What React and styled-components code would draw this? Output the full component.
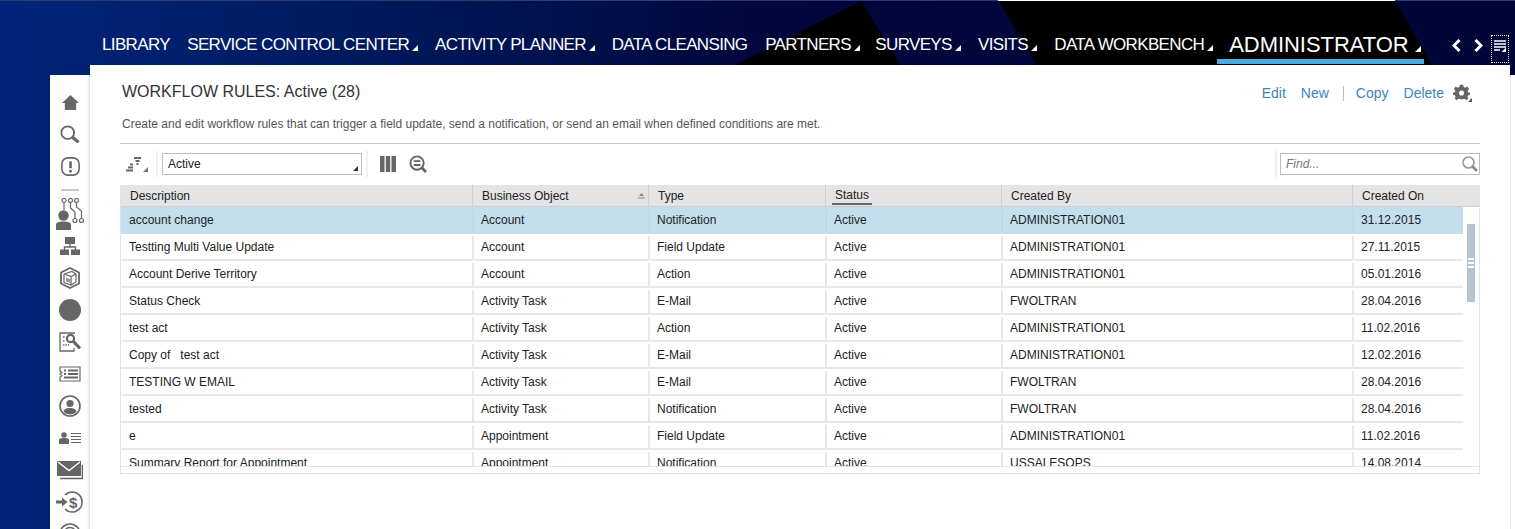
import React from "react";
import styled, { createGlobalStyle } from "styled-components";

const GlobalStyle = createGlobalStyle`
  html, body {
    margin: 0;
    padding: 0;
    height: 100%;
    overflow: hidden;
    background: #fff;
    font-family: "Liberation Sans", Arial, sans-serif;
  }
`;

const Page = styled.div`
  width: 1515px;
  height: 529px;
  overflow: hidden;
  display: flex;
  flex-direction: column;
`;

const Header = styled.header`
  position: relative;
  height: 65px;
  flex: none;
  background: linear-gradient(90deg, #00257a 0%, #00195c 25%, #00073c 50%, #000538 100%);
  overflow: hidden;
`;

const HeaderArt = styled.svg`
  position: absolute;
  left: 0;
  top: 0;
`;

const Nav = styled.nav`
  position: relative;
  height: 100%;
  display: flex;
  align-items: flex-start;
  padding-left: 102px;
`;

const NavItem = styled.a`
  display: flex;
  align-items: flex-end;
  height: ${(p) => (p.$active ? "59px" : "60px")};
  box-sizing: border-box;
  margin-top: 5px;
  padding: ${(p) => (p.$active ? "0 3px 0 12px" : "0 8px 0 0")};
  margin-right: ${(p) => p.$gap}px;
  color: #fff;
  font-size: ${(p) => (p.$active ? "22px" : "17px")};
  letter-spacing: ${(p) => (p.$active ? "-0.05px" : "-0.65px")};
  white-space: nowrap;
  border-bottom: ${(p) => (p.$active ? "5px solid #4aa9de" : "0")};
`;

const NavLabel = styled.span`
  display: block;
  height: ${(p) => (p.$active ? "28px" : "40px")};
  line-height: ${(p) => (p.$active ? "28px" : "40px")};
`;

const Caret = styled.svg`
  display: block;
  flex: none;
  margin-left: ${(p) => p.$left ?? 3}px;
  margin-bottom: ${(p) => p.$bottom ?? 14}px;
`;

const NavTools = styled.div`
  position: absolute;
  left: 1452px;
  top: 35px;
  display: flex;
  align-items: flex-start;
`;

const Chevron = styled.svg`
  display: block;
  margin-top: 4px;
  margin-right: ${(p) => p.$right}px;
`;

const MenuToggle = styled.div`
  width: 18px;
  height: 28px;
  box-sizing: border-box;
  border: 1px dotted #e6e6e6;
  padding: 4px 0 0 2px;
`;

const Body = styled.div`
  flex: 1;
  min-height: 0;
  display: flex;
  background: linear-gradient(90deg, #00257a 0, #002070 90px, #000538 90px);
`;

const Gutter = styled.div`
  width: 50px;
  flex: none;
`;

const Rail = styled.aside`
  width: 40px;
  flex: none;
  margin-top: 10px;
  background: linear-gradient(90deg, #fff 0, #fff 37px, #e0e0e0 40px);
  display: flex;
  flex-direction: column;
  align-items: center;
  padding-top: 20px;
  overflow: hidden;
  box-sizing: border-box;
`;

const RailIcon = styled.div`
  height: ${(p) => p.$h}px;
  flex: none;
  width: 40px;
  display: flex;
  justify-content: center;
  align-items: flex-start;
`;

const RailRule = styled.div`
  width: 18px;
  height: 2px;
  background: #c8c8c8;
  flex: none;
  margin-bottom: 7px;
`;

const Main = styled.main`
  width: 1420px;
  flex: none;
  background: #fff;
  padding: 0 30px;
  box-sizing: border-box;
`;

const RightEdge = styled.div`
  flex: 1;
  margin-top: 10px;
  background: #fff;
  border-left: 1px solid #e6e6e6;
`;

const TitleRow = styled.div`
  display: flex;
  justify-content: space-between;
  align-items: flex-start;
  height: 34px;
  padding-top: 18px;
`;

const Title = styled.h1`
  margin: 0 0 0 2px;
  font-size: 16px;
  font-weight: 400;
  line-height: 18px;
  color: #333;
`;

const Actions = styled.div`
  display: flex;
  align-items: center;
  height: 20px;
  margin-right: 8px;
  font-size: 14px;
`;

const Action = styled.a`
  margin-left: ${(p) => p.$left ?? 0}px;
  color: #3a87b8;
`;

const ActionDivider = styled.span`
  width: 1px;
  height: 15px;
  background: #bdbdbd;
  margin-left: 14px;
`;

const GearIcon = styled.svg`
  display: block;
  margin-left: 9px;
`;

const Intro = styled.p`
  margin: 0 0 0 2px;
  font-size: 12px;
  line-height: 14px;
  color: #555;
  height: 26px;
`;

const Toolbar = styled.div`
  border-top: 1px solid #c9c9c9;
  height: 42px;
  box-sizing: border-box;
  padding-bottom: 1px;
  display: flex;
  align-items: center;
`;

const SortIcon = styled.svg`
  display: block;
  margin-left: 6px;
`;

const ToolDivider = styled.span`
  width: 2px;
  height: 26px;
  background: #efefef;
  margin: ${(p) => p.$margin};
`;

const SelectBox = styled.div`
  width: 200px;
  height: 22px;
  box-sizing: border-box;
  border: 1px solid #bdbdbd;
  font-size: 12px;
  color: #222;
  padding-left: 5px;
  line-height: 20px;
  position: relative;
`;

const SelectCaret = styled.svg`
  position: absolute;
  right: 3px;
  bottom: 3px;
`;

const FilterIcon = styled.svg`
  display: block;
  margin-left: 13px;
`;

const FindBox = styled.div`
  width: 200px;
  height: 22px;
  box-sizing: border-box;
  border: 1px solid #bdbdbd;
  font-size: 12px;
  font-style: italic;
  color: #777;
  padding-left: 5px;
  line-height: 20px;
  position: relative;
`;

const FindIcon = styled.svg`
  position: absolute;
  right: 0;
  top: 1px;
`;

const ToolSpacer = styled.div`
  flex: 1;
`;

const Table = styled.div`
  width: 1360px;
  height: 289px;
  box-sizing: border-box;
  border: 1px solid #e2e2e2;
  border-top: 0;
  position: relative;
  overflow: hidden;
`;

const HeadRow = styled.div`
  display: grid;
  grid-template-columns: 351px 176px 177px 176px 351px 127px;
  height: 22px;
  background: #e4e4e4;
  border-bottom: 1px solid #cfcfcf;
  box-sizing: border-box;
`;

const HeadCell = styled.div`
  display: flex;
  align-items: center;
  position: relative;
  height: 21px;
  padding-left: 9px;
  font-size: 12px;
  color: #222;
  border-left: ${(p) => (p.$first ? "0" : "1px solid #cfcfcf")};
`;

const HeadLabel = styled.span`
  ${(p) =>
    p.$sorted &&
    "border-bottom: 2px solid #666; padding: 0 3px; margin-left: -3px; height: 15px; line-height: 15px; margin-top: 2px;"}
`;

const SortMark = styled.svg`
  position: absolute;
  right: 3px;
  top: 8px;
`;

const Rows = styled.div`
  width: 1342px;
  height: 260px;
  overflow: hidden;
`;

const Row = styled.div`
  display: grid;
  grid-template-columns: 351px 176px 177px 176px 351px 111px;
  height: 27px;
  box-sizing: border-box;
  align-items: stretch;
  border-bottom: 2px solid #e8e8e8;
  background: ${(p) => (p.$selected ? "#c3dfee" : "#fff")};
  ${(p) => p.$selected && "border-bottom-color: #c3dfee;"}
`;

const Cell = styled.div`
  padding-left: ${(p) => (p.$first ? 8 : 7)}px;
  margin-top: 2px;
  font-size: 12px;
  line-height: 23px;
  color: #222;
  white-space: pre;
  border-left: ${(p) => (p.$first ? "0" : "2px solid #e8e8e8")};
  ${(p) => p.$selected && "border-left-color: #bdd8e6;"}
`;

const ScrollThumb = styled.div`
  position: absolute;
  right: 4px;
  top: 39px;
  width: 8px;
  height: 78px;
  background: #b7c3cf;
  display: flex;
  flex-direction: column;
  align-items: center;
  justify-content: center;
  gap: 2px;
`;

const ThumbGrip = styled.span`
  width: 6px;
  height: 2px;
  background: #fff;
`;

const HScrollBar = styled.div`
  position: absolute;
  left: 0;
  right: 0;
  bottom: 0;
  height: 6px;
  background: #fff;
  border-top: 1px solid #e2e2e2;
`;

const fill = "#666";

const NavCaret = ({ left, bottom }) => (
  <Caret $left={left} $bottom={bottom} width="6" height="6" viewBox="0 0 6 6">
    <path d="M6 0V6H0Z" fill="#fff" />
  </Caret>
);

const railIcons = [
  {
    h: 30,
    w: 17,
    vb: "0 0 18 16",
    body: <path d="M9 0 18 8.5H15V16H3V8.5H0Z" fill={fill} />,
  },
  {
    h: 32,
    w: 20,
    vb: "0 0 22 20",
    body: (
      <>
        <circle cx="8.5" cy="8.5" r="7" fill="none" stroke={fill} strokeWidth="2" />
        <path d="M13.5 13.5 20.5 19" stroke={fill} strokeWidth="3.5" />
      </>
    ),
  },
  {
    h: 32,
    w: 19,
    vb: "0 0 22 22",
    body: (
      <>
        <rect x="1" y="1" width="20" height="20" rx="7" fill="none" stroke={fill} strokeWidth="1.8" />
        <path d="M11 5V13" stroke={fill} strokeWidth="3" />
        <circle cx="11" cy="16.5" r="1.7" fill={fill} />
      </>
    ),
  },
];

const railIconsRest = [
  {
    h: 39,
    w: 28,
    vb: "0 0 28 32",
    body: (
      <>
        <g fill="none" stroke={fill} strokeWidth="1.2">
          <circle cx="8" cy="2.5" r="2" />
          <circle cx="14.5" cy="2.5" r="2" />
          <circle cx="20.5" cy="2.5" r="2" />
          <circle cx="19" cy="22.5" r="2" />
          <circle cx="25.5" cy="22.5" r="2" />
          <path d="M8 4.5V12M14.5 4.5V10L19 14V20.5M20.5 4.5V9L25.5 13V20.5" />
        </g>
        <circle cx="7.5" cy="17.5" r="5.2" fill={fill} />
        <path d="M0 32V26.5C0 24.5 3 23.5 7.5 23.5S15 24.5 15 26.5V32Z" fill={fill} />
      </>
    ),
  },
  {
    h: 30,
    w: 20,
    vb: "0 0 20 18",
    body: (
      <>
        <path d="M5 0H15V7H5ZM0 12.5H9V18H0ZM11 12.5H20V18H11Z" fill={fill} />
        <path d="M10 7V10M4.5 13V10H15.5V13" fill="none" stroke={fill} strokeWidth="1.4" />
      </>
    ),
  },
  {
    h: 32,
    w: 20,
    vb: "0 0 20 22",
    body: (
      <>
        <path d="M10 1 19 5.5V16.5L10 21 1 16.5V5.5Z" fill="none" stroke={fill} strokeWidth="1.8" />
        <path d="M4 7 12 4.5 16 7V15L11 18 4 15.5ZM4 7 11 9.5 16 7M11 9.5V18" fill="none" stroke={fill} strokeWidth="1.2" />
        <path d="M6 10.5 10 12V16L6 14.5Z" fill="#999" />
      </>
    ),
  },
  {
    h: 33,
    w: 22,
    vb: "0 0 22 22",
    body: <circle cx="11" cy="11" r="11" fill={fill} />,
  },
  {
    h: 34,
    w: 22,
    vb: "0 0 22 20",
    body: (
      <>
        <path d="M16 1H1V19H15V16" fill="none" stroke={fill} strokeWidth="1.3" />
        <circle cx="11.5" cy="6.5" r="3.6" fill="none" stroke={fill} strokeWidth="2.2" />
        <path d="M14 9 21 16.5" stroke={fill} strokeWidth="3.2" />
        <path d="M4 5H6M4 9H6M4 13H10" stroke={fill} strokeWidth="1.3" strokeDasharray="1.5 1" />
      </>
    ),
  },
  {
    h: 29,
    w: 22,
    vb: "0 0 22 16",
    body: (
      <>
        <path d="M1 1H21V15H1V11L3 9.5 1 8 3 6.5 1 5Z" fill="none" stroke={fill} strokeWidth="1.2" />
        <path d="M5 4.5H7M9 4.5H19M5 8H7M9 8H19M5 11.5H19" stroke={fill} strokeWidth="2" />
      </>
    ),
  },
  {
    h: 37,
    w: 22,
    vb: "0 0 22 22",
    body: (
      <>
        <circle cx="11" cy="11" r="10" fill="none" stroke={fill} strokeWidth="1.6" />
        <circle cx="11" cy="8.5" r="3.6" fill={fill} />
        <path d="M4.5 16.5C5.5 13.5 8 13 11 13S16.5 13.5 17.5 16.5C16 18.5 13.5 19.5 11 19.5S6 18.5 4.5 16.5Z" fill={fill} />
      </>
    ),
  },
  {
    h: 29,
    w: 22,
    vb: "0 0 22 12",
    body: (
      <>
        <circle cx="5" cy="3" r="2.8" fill={fill} />
        <path d="M0 12V8C0 6.5 2 6 5 6S10 6.5 10 8V12Z" fill={fill} />
        <path d="M12 1.5H22M12 4.5H22M12 7.5H22M12 10.5H22" stroke={fill} strokeWidth="1.2" />
      </>
    ),
  },
  {
    h: 30,
    w: 26,
    vb: "0 0 26 19",
    body: (
      <>
        <path d="M0 0H24V15H0Z" fill={fill} />
        <path d="M1 1 12 9.5 23 1" fill="none" stroke="#fff" strokeWidth="1.4" />
        <path d="M3 17.5H25.5V4" fill="none" stroke={fill} strokeWidth="1.6" />
      </>
    ),
  },
  {
    h: 32,
    w: 28,
    vb: "0 0 28 22",
    body: (
      <>
        <path d="M9 4A10 10 0 1 1 9 18" fill="none" stroke={fill} strokeWidth="1.5" />
        <path d="M0 9.5H6V6.5L11.5 11 6 15.5V12.5H0Z" fill={fill} />
        <text x="13" y="17" fontSize="15" fontWeight="700" fill={fill} fontFamily="Liberation Sans">$</text>
      </>
    ),
  },
  {
    h: 32,
    w: 22,
    vb: "0 0 22 22",
    body: (
      <>
        <circle cx="11" cy="11" r="10" fill="none" stroke={fill} strokeWidth="1.6" />
        <circle cx="11" cy="11" r="6.5" fill="none" stroke={fill} strokeWidth="1.4" />
      </>
    ),
  },
];

const columns = [
  { label: "Description", first: true },
  { label: "Business Object", sort: true },
  { label: "Type" },
  { label: "Status", sorted: true },
  { label: "Created By" },
  { label: "Created On" },
];

const rows = [
  ["account change", "Account", "Notification", "Active", "ADMINISTRATION01", "31.12.2015"],
  ["Testting Multi Value Update", "Account", "Field Update", "Active", "ADMINISTRATION01", "27.11.2015"],
  ["Account Derive Territory", "Account", "Action", "Active", "ADMINISTRATION01", "05.01.2016"],
  ["Status Check", "Activity Task", "E-Mail", "Active", "FWOLTRAN", "28.04.2016"],
  ["test act", "Activity Task", "Action", "Active", "ADMINISTRATION01", "11.02.2016"],
  ["Copy of   test act", "Activity Task", "E-Mail", "Active", "ADMINISTRATION01", "12.02.2016"],
  ["TESTING W EMAIL", "Activity Task", "E-Mail", "Active", "FWOLTRAN", "28.04.2016"],
  ["tested", "Activity Task", "Notification", "Active", "FWOLTRAN", "28.04.2016"],
  ["e", "Appointment", "Field Update", "Active", "ADMINISTRATION01", "11.02.2016"],
  ["Summary Report for Appointment", "Appointment", "Notification", "Active", "USSALESOPS", "14.08.2014"],
];

const navItems = [
  { label: "LIBRARY", gap: 9.3 },
  { label: "SERVICE CONTROL CENTER", caret: true, gap: 9 },
  { label: "ACTIVITY PLANNER", caret: true, gap: 8.8 },
  { label: "DATA CLEANSING", gap: 9.7 },
  { label: "PARTNERS", caret: true, gap: 7.4 },
  { label: "SURVEYS", caret: true, gap: 9.3 },
  { label: "VISITS", caret: true, gap: 9.3 },
  { label: "DATA WORKBENCH", caret: true, gap: -4 },
];

export default function App() {
  return (
    <>
      <GlobalStyle />
      <Page>
        <Header>
          <HeaderArt width="1515" height="65" viewBox="0 0 1515 65">
            <path d="M735 65 861 1 900 65Z" fill="#000" />
            <path d="M998 0H1395L1432 65H1037Z" fill="#000" />
            <rect x="0" y="0" width="1515" height="1" fill="#2c3a70" />
            <rect x="998" y="0" width="397" height="1" fill="#fff" />
          </HeaderArt>
          <Nav>
            {navItems.map((item) => (
              <NavItem key={item.label} $gap={item.gap}>
                <NavLabel>{item.label}</NavLabel>
                {item.caret && <NavCaret />}
              </NavItem>
            ))}
            <NavItem $active $gap={0}>
              <NavLabel $active>ADMINISTRATOR</NavLabel>
              <NavCaret left={6} bottom={7} />
            </NavItem>
          </Nav>
          <NavTools>
            <Chevron $right={13} width="9" height="13" viewBox="0 0 9 13">
              <path d="M7.5 1 2 6.5 7.5 12" fill="none" stroke="#fff" strokeWidth="3" />
            </Chevron>
            <Chevron $right={8} width="9" height="13" viewBox="0 0 9 13">
              <path d="M1.5 1 7 6.5 1.5 12" fill="none" stroke="#fff" strokeWidth="3" />
            </Chevron>
            <MenuToggle>
              <svg width="12" height="12" viewBox="0 0 12 12" style={{ display: "block" }}>
                <path d="M0 1H12M0 4H12M0 7H12M0 10H6" stroke="#fff" strokeWidth="1.6" />
                <path d="M12 7.5V12H7.5Z" fill="#fff" />
              </svg>
            </MenuToggle>
          </NavTools>
        </Header>
        <Body>
          <Gutter />
          <Rail>
            {railIcons.map((icon, i) => (
              <RailIcon key={i} $h={icon.h}>
                <svg width={icon.w} viewBox={icon.vb}>{icon.body}</svg>
              </RailIcon>
            ))}
            <RailRule />
            {railIconsRest.map((icon, i) => (
              <RailIcon key={i} $h={icon.h}>
                <svg width={icon.w} viewBox={icon.vb}>{icon.body}</svg>
              </RailIcon>
            ))}
          </Rail>
          <Main>
            <TitleRow>
              <Title>WORKFLOW RULES: Active (28)</Title>
              <Actions>
                <Action>Edit</Action>
                <Action $left={15}>New</Action>
                <ActionDivider />
                <Action $left={12}>Copy</Action>
                <Action $left={15}>Delete</Action>
                <GearIcon width="19" height="18" viewBox="0 0 19 18">
                  <g transform="scale(0.85)">
                    <path
                      d="M8 1H12L12.5 3.6 14.5 4.5 16.8 3 19 5.8 17.2 7.6 17.8 9.8 20 10.4V12.6L17.8 13.2 17 15.2 18.2 17 15.6 19 13.8 17.4 11.6 18H8.4L6.2 17.4 4.4 19 1.8 17 3 15.2 2.2 13.2 0 12.6V10.4L2.2 9.8 2.8 7.6 1 5.8 3.2 3 5.5 4.5 7.5 3.6Z"
                      fill="#666"
                    />
                    <circle cx="10" cy="10.5" r="3" fill="#fff" />
                  </g>
                  <path d="M19 14V18H15Z" fill="#555" />
                </GearIcon>
              </Actions>
            </TitleRow>
            <Intro>Create and edit workflow rules that can trigger a field update, send a notification, or send an email when defined conditions are met.</Intro>
            <Toolbar>
              <SortIcon width="22" height="15" viewBox="0 0 22 15">
                <path d="M0 13.5H7M2 10.5H7M4 7.5H7" stroke="#666" strokeWidth="2" />
                <path d="M8 1H15M9.5 4H13.5M10.5 7H12.5" stroke="#666" strokeWidth="2" />
                <path d="M22 10V15H17Z" fill="#777" />
              </SortIcon>
              <ToolDivider $margin="0 4px 0 8px" />
              <SelectBox>
                Active
                <SelectCaret width="5" height="5" viewBox="0 0 5 5">
                  <path d="M5 0V5H0Z" fill="#333" />
                </SelectCaret>
              </SelectBox>
              <ToolDivider $margin="0 12px 0 4px" />
              <svg width="16" height="16" viewBox="0 0 16 16">
                <path d="M0 0H4.5V16H0ZM5.8 0H10.2V16H5.8ZM11.5 0H16V16H11.5Z" fill="#666" />
              </svg>
              <FilterIcon width="18" height="18" viewBox="0 0 19 19">
                <circle cx="8.5" cy="8.5" r="7" fill="none" stroke="#666" strokeWidth="2" />
                <path d="M5 6.5H12M5 10.5H12" stroke="#666" strokeWidth="2" />
                <path d="M13 13 18 18" stroke="#666" strokeWidth="3" />
              </FilterIcon>
              <ToolSpacer />
              <ToolDivider $margin="0 3px 0 0" />
              <FindBox>
                Find...
                <FindIcon width="18" height="18" viewBox="0 0 18 18">
                  <circle cx="7.5" cy="7.5" r="5.5" fill="none" stroke="#999" strokeWidth="1.6" />
                  <path d="M11.5 11.5 16 16" stroke="#888" strokeWidth="2.6" />
                </FindIcon>
              </FindBox>
            </Toolbar>
            <Table>
              <HeadRow>
                {columns.map((c) => (
                  <HeadCell key={c.label} $first={c.first}>
                    <HeadLabel $sorted={c.sorted}>{c.label}</HeadLabel>
                    {c.sort && (
                      <SortMark width="7" height="6" viewBox="0 0 7 6">
                        <path d="M3.5 0 6 3H1ZM0 4.5H7V5.5H0Z" fill="#888" />
                      </SortMark>
                    )}
                  </HeadCell>
                ))}
              </HeadRow>
              <Rows>
                {rows.map((row, i) => (
                  <Row key={i} $selected={i === 0}>
                    {row.map((text, j) => (
                      <Cell key={j} $first={j === 0} $selected={i === 0}>{text}</Cell>
                    ))}
                  </Row>
                ))}
              </Rows>
              <ScrollThumb>
                <ThumbGrip />
                <ThumbGrip />
                <ThumbGrip />
              </ScrollThumb>
              <HScrollBar />
            </Table>
          </Main>
          <RightEdge />
        </Body>
      </Page>
    </>
  );
}
